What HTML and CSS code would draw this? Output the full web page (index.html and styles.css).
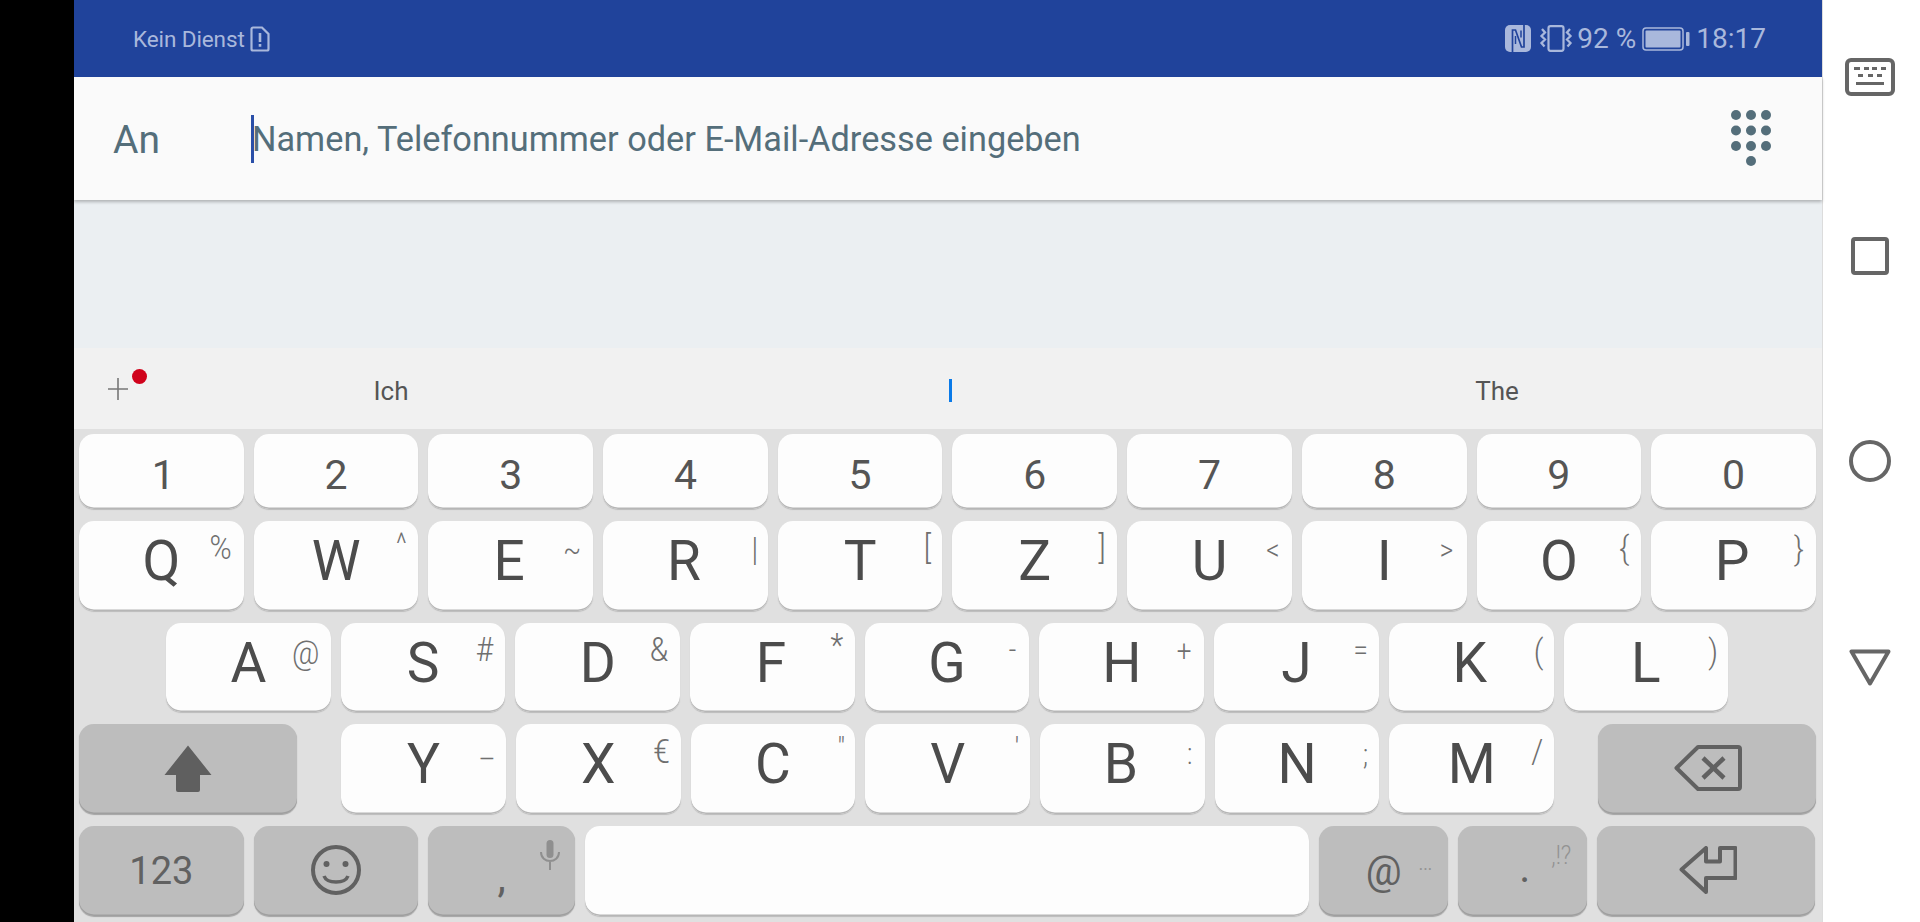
FILE: index.html
```
<!DOCTYPE html>
<html lang="de">
<head>
<meta charset="utf-8">
<title>An</title>
<link rel="stylesheet" href="styles.css">
</head>
<body>
<div class="screen">
  <div class="bezel"></div>
  <main class="app">
    <header class="status">
      <div class="status-left">
        <span class="carrier">Kein Dienst</span>
        <svg class="ic-sim" viewBox="0 0 20 26"><path d="M3 1.500h9l6.500 6.500v15a1.500 1.500 0 0 1-1.500 1.500h-14a1.500 1.500 0 0 1-1.500-1.500v-20a1.500 1.500 0 0 1 1.500-1.500z" fill="none" stroke="currentColor" stroke-width="2.200"/><path d="M8.700 7h2.600v9h-2.600zM8.700 18h2.600v2.800h-2.600z" fill="currentColor"/></svg>
      </div>
      <div class="status-right">
        <svg class="ic-nfc" viewBox="0 0 26 27"><rect width="26" height="27" rx="5" fill="currentColor"/><path d="M7.500 27V5h3l6 17h2.500V0" fill="none" stroke="#20439b" stroke-width="1.700"/><path d="M10.500 11v8M16 5.500v7" fill="none" stroke="#20439b" stroke-width="1.500"/></svg>
        <svg class="ic-vib" viewBox="0 0 34 27"><rect x="9.500" y="1.200" width="15" height="24.600" rx="2" fill="none" stroke="currentColor" stroke-width="2.200"/><path d="M3 4l3 3.500-3.500 3.500 3.500 3.500-3.500 3.500 3 3.500M31 4l-3 3.500 3.500 3.500-3.500 3.500 3.500 3.500-3 3.500" fill="none" stroke="currentColor" stroke-width="2.300"/></svg>
        <span class="pct">92 %</span>
        <svg class="ic-bat" viewBox="0 0 48 24"><rect x="1" y="1" width="40" height="22" rx="3" fill="none" stroke="currentColor" stroke-width="1.500"/><rect x="3.500" y="3.500" width="35" height="17" rx="1" fill="currentColor"/><rect x="44" y="5" width="3.500" height="14" rx="1" fill="currentColor"/></svg>
        <span class="time">18:17</span>
      </div>
    </header>

    <section class="to-field">
      <span class="to-label">An</span>
      <div class="to-input"><span class="caret"></span><span class="placeholder">Namen, Telefonnummer oder E-Mail-Adresse eingeben</span></div>
      <svg class="ic-dial" viewBox="0 0 40 56"><g fill="#546e7a"><circle cx="5" cy="5" r="5"/><circle cx="20" cy="5" r="5"/><circle cx="35" cy="5" r="5"/><circle cx="5" cy="20.500" r="5"/><circle cx="20" cy="20.500" r="5"/><circle cx="35" cy="20.500" r="5"/><circle cx="5" cy="36" r="5"/><circle cx="20" cy="36" r="5"/><circle cx="35" cy="36" r="5"/><circle cx="20" cy="51" r="5"/></g></svg>
    </section>

    <section class="results"></section>

    <section class="candidates">
      <div class="cand-plus">
        <svg class="ic-plus" viewBox="0 0 20 22"><path d="M10 0v22M0 11h20" stroke="#777" stroke-width="1.600" fill="none"/></svg>
        <span class="dot"></span>
      </div>
      <div class="cand">Ich</div>
      <div class="cand"><span class="cand-caret"></span></div>
      <div class="cand">The</div>
    </section>

    <section class="keyboard">
      <div class="row row-num">
        <div class="key one">1</div><div class="key">2</div><div class="key">3</div><div class="key">4</div><div class="key">5</div><div class="key">6</div><div class="key">7</div><div class="key">8</div><div class="key">9</div><div class="key">0</div>
      </div>
      <div class="row row-q">
        <div class="key">Q<span class="hint x23 y27">%</span></div>
        <div class="key">W<span class="hint x17 y23 sm">^</span></div>
        <div class="key nudge">E<span class="hint x21 y29 sm">~</span></div>
        <div class="key nudge">R<span class="hint x13 y29">|</span></div>
        <div class="key">T<span class="hint x15 y27">[</span></div>
        <div class="key">Z<span class="hint x15 y27">]</span></div>
        <div class="key">U<span class="hint x19 y29 sm">&lt;</span></div>
        <div class="key">I<span class="hint x20 y29 sm">&gt;</span></div>
        <div class="key">O<span class="hint x17 y28">{</span></div>
        <div class="key nudge">P<span class="hint x17 y28">}</span></div>
      </div>
      <div class="row row-a">
        <div class="key">A<span class="hint x25 y30">@</span></div>
        <div class="key">S<span class="hint x21 y27">#</span></div>
        <div class="key">D<span class="hint x21 y27">&amp;</span></div>
        <div class="key nudge">F<span class="hint x18 y23">*</span></div>
        <div class="key">G<span class="hint x17 y27 sm">-</span></div>
        <div class="key">H<span class="hint x20 y28 sm">+</span></div>
        <div class="key">J<span class="hint x18 y27 sm">=</span></div>
        <div class="key nudge">K<span class="hint x15 y29">(</span></div>
        <div class="key">L<span class="hint x15 y29">)</span></div>
      </div>
      <div class="row row-y">
        <div class="key fn wide"><svg class="ic-shift" viewBox="0 0 48 47"><path d="M24 0.500L47.500 30h-11.500v15a2 2 0 0 1-2 2h-20a2 2 0 0 1-2-2v-15h-11.500z" fill="#5f5f5f"/></svg></div>
        <div class="key push">Y<span class="hint x19 y35 sm">–</span></div>
        <div class="key">X<span class="hint x19 y28">€</span></div>
        <div class="key">C<span class="hint x14 y24 sm">"</span></div>
        <div class="key">V<span class="hint x13 y24 sm">'</span></div>
        <div class="key nudge">B<span class="hint x15 y30 sm">:</span></div>
        <div class="key">N<span class="hint x14 y31 sm">;</span></div>
        <div class="key">M<span class="hint x17 y28">/</span></div>
        <div class="key fn wide end"><svg class="ic-back" viewBox="0 0 68 46"><path d="M2.500 23L24 2h40a2 2 0 0 1 2 2v38a2 2 0 0 1-2 2H24z" fill="none" stroke="#616161" stroke-width="4" stroke-linejoin="round"/><path d="M29 13l21 20M50 13L29 33" fill="none" stroke="#616161" stroke-width="4.500"/></svg></div>
      </div>
      <div class="row row-bottom">
        <div class="key fn">123</div>
        <div class="key fn"><svg class="ic-smile" viewBox="0 0 50 50"><circle cx="25" cy="25" r="23" fill="none" stroke="#616161" stroke-width="4"/><circle cx="15.500" cy="19" r="3" fill="#616161"/><circle cx="34.500" cy="19" r="3" fill="#616161"/><path d="M13 31c3 8 21 8 24 0" fill="none" stroke="#616161" stroke-width="3.500"/></svg></div>
        <div class="key fn comma">,<svg class="ic-mic" viewBox="0 0 20 30"><rect x="6.500" y="0" width="7" height="18" rx="3.500" fill="#8f8f8f"/><path d="M1 12c0 12 18 12 18 0M10 21v9" fill="none" stroke="#8f8f8f" stroke-width="2"/></svg></div>
        <div class="key space"></div>
        <div class="key fn small at">@<span class="hint x23 y36 faint">…</span></div>
        <div class="key fn small dotkey">.<span class="hint x26 y30 faint">,!?</span></div>
        <div class="key fn wide"><svg class="ic-enter" viewBox="0 0 58 48"><path d="M2.500 23.500L27 2v13.500h14V2h15.500v30H27v14z" fill="none" stroke="#616161" stroke-width="4" stroke-linejoin="round"/></svg></div>
      </div>
    </section>
  </main>

  <nav class="navbar">
    <svg class="nav-kbd" viewBox="0 0 50 38"><rect x="2" y="2" width="46" height="34" rx="4" fill="none" stroke="#666" stroke-width="4"/><path d="M9 9h6v3H9zM19 9h5v3h-5zM27 9h5v3h-5zM36 9h5v3h-5zM13 16h5v3h-5zM23 16h5v3h-5zM32 16h5v3h-5zM11 24h28v3H11z" fill="#666"/></svg>
    <svg class="nav-square" viewBox="0 0 38 38"><rect x="2" y="2" width="34" height="34" rx="2" fill="none" stroke="#666" stroke-width="4"/></svg>
    <svg class="nav-circle" viewBox="0 0 42 42"><circle cx="21" cy="21" r="19" fill="none" stroke="#666" stroke-width="4"/></svg>
    <svg class="nav-tri" viewBox="0 0 42 37"><path d="M2.500 2.500h37L21 34.500z" fill="none" stroke="#666" stroke-width="4" stroke-linejoin="round"/></svg>
  </nav>
</div>
</body>
</html>
```

FILE: styles.css
```
* { box-sizing: border-box; }
html, body { margin: 0; padding: 0; height: 922px; overflow: hidden; background: #000; }
body { font-family: Roboto, "Liberation Sans", sans-serif; }
svg { display: block; flex: none; }

.screen { display: flex; width: 1920px; height: 922px; }
.bezel { width: 74px; flex: none; background: #000; }
.app { width: 1748px; flex: none; display: flex; flex-direction: column; background: #ebeff2; }

/* status bar */
.status { height: 77px; flex: none; background: #20439b; color: #a9b8dc; display: flex; align-items: center; justify-content: space-between; padding: 0 56px 0 59px; }
.status-left, .status-right { display: flex; align-items: center; }
.carrier { font-size: 22.500px; letter-spacing: -0.100px; }
.ic-sim { width: 20px; height: 26px; margin-left: 5px; }
.ic-nfc { width: 26px; height: 27px; }
.ic-vib { width: 34px; height: 27px; margin-left: 8px; }
.pct { font-size: 28px; margin-left: 4px; }
.ic-bat { width: 48px; height: 24px; margin-left: 6px; }
.time { font-size: 28px; margin-left: 6px; }

/* recipient field */
.to-field { height: 123px; flex: none; background: #fafafa; display: flex; align-items: center; padding: 0 51px 0 39px; color: #546e7a; box-shadow: 0 2px 3px rgba(0,0,0,.25); position: relative; }
.to-label { font-size: 39px; width: 138px; flex: none; padding-top: 2px; }
.to-input { flex: 1; display: flex; align-items: center; position: relative; }
.caret { width: 2.500px; height: 48px; background: #2a4fa8; flex: none; margin-right: -1.500px; }
.placeholder { font-size: 34.300px; white-space: nowrap; }
.ic-dial { width: 40px; height: 56px; margin-top: -2px; }

.results { height: 148px; flex: none; }

/* suggestion strip */
.candidates { height: 81px; flex: none; background: #f1f1f1; display: grid; grid-template-columns: 74px 486px 632px 462px; align-items: center; color: #555; }
.cand-plus { position: relative; display: flex; padding-left: 34px; }
.ic-plus { width: 20px; height: 22px; }
.dot { position: absolute; left: 58px; top: -9px; width: 15px; height: 15px; border-radius: 50%; background: #d0021b; }
.cand { font-size: 26px; display: flex; justify-content: center; align-items: center; padding-top: 4px; }
.cand-caret { width: 3px; height: 23px; background: #0a7ae8; }

/* keyboard */
.keyboard { height: 493px; flex: none; background: #e0e0e0; padding: 5px 6.500px 0 5px; display: flex; flex-direction: column; gap: 12px; }
.row { display: flex; gap: 10px; flex: none; height: 90px; }
.row-num { height: 75px; }
.row-a { height: 89px; padding-left: 87px; }

.key { position: relative; flex: none; width: 164.700px; height: 100%; border-radius: 15px; background: #fdfdfd; box-shadow: inset 0 -1.500px 0 #b6b6b6, 0 1px 1px #bcbcbc; display: flex; align-items: center; justify-content: center; color: #4c4c4c; font-size: 55px; padding-bottom: 10px; }
.nudge { padding-right: 3px; }
.row-num .key { font-size: 41px; padding: 6px 0 0; color: #555; }
.row-num .one { padding-left: 4px; }
.fn { background: #bdbdbd; box-shadow: inset 0 -1.500px 0 #9f9f9f, 0 1px 1px #a4a4a4; color: #616161; font-size: 38px; padding: 0; }
.wide { width: 217.500px; }
.push { margin-left: 34.800px; }
.end { margin-left: auto; }
.comma { width: 146.400px; font-size: 42px; padding: 12px 0 0 0; }
.space { width: 724.500px; }
.small { width: 129px; }
.at { padding: 0; font-size: 40px; }
.dotkey { font-size: 42px; padding: 0 0 8px 4px; }
.ic-shift { width: 48px; height: 47px; margin-top: -2px; }
.ic-back { width: 68px; height: 46px; margin: -3px 0 0 3px; }
.ic-smile { width: 50px; height: 50px; margin-top: -3px; }
.ic-enter { width: 58px; height: 48px; margin: -2px 0 0 4px; }
.ic-mic { position: absolute; right: 15px; top: 14px; width: 20px; height: 30px; }

.hint { position: absolute; font-size: 30px; font-weight: 300; line-height: 1; color: #6f6f6f; transform: translate(50%, -50%) scaleY(1.12); }
.sm { font-size: 26px; }
.faint { font-size: 23px; color: #929292; }
.x13 { right: 13px; } .x14 { right: 14px; } .x15 { right: 15px; } .x17 { right: 17px; }
.x18 { right: 18px; } .x19 { right: 19px; } .x20 { right: 20px; } .x21 { right: 21px; }
.x23 { right: 23px; } .x25 { right: 25px; } .x26 { right: 26px; }
.y23 { top: 23px; } .y24 { top: 24px; } .y27 { top: 27px; } .y28 { top: 28px; }
.y29 { top: 29px; } .y30 { top: 30px; } .y31 { top: 31px; } .y35 { top: 35px; } .y36 { top: 36px; }

/* system navigation */
.navbar { width: 98px; flex: none; background: #fff; border-left: 1px solid #dcdcdc; display: flex; flex-direction: column; align-items: center; padding: 58px 3px 0 0; }
.nav-kbd { width: 50px; height: 38px; }
.nav-square { width: 38px; height: 38px; margin-top: 141px; }
.nav-circle { width: 42px; height: 42px; margin-top: 165px; }
.nav-tri { width: 42px; height: 37px; margin-top: 167px; }
```
